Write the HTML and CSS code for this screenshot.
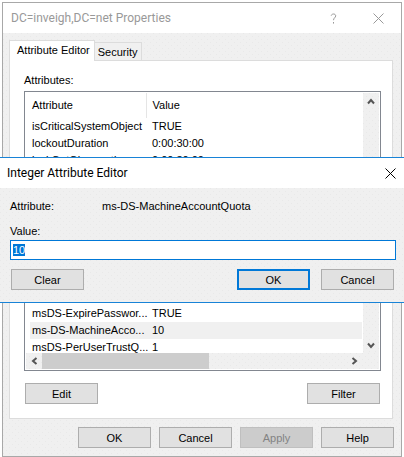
FILE: index.html
```
<!DOCTYPE html>
<html lang="en">
<head>
<meta charset="utf-8">
<title>DC=inveigh,DC=net Properties</title>
<link rel="stylesheet" href="styles.css">
</head>
<body>
<main class="window">
  <header class="titlebar inactive">
    <h1 class="title">DC=inveigh,DC=net Properties</h1>
    <button class="caption" aria-label="Help"><svg width="11" height="11" viewBox="0 0 11 11"><path d="M3.2 2.6C3.5.6 7.6.3 7.7 2.8C7.7 4.8 5.5 4.8 5.5 7.2M5.5 9V10.6"/></svg></button>
    <button class="caption" aria-label="Close"><svg width="11" height="11" viewBox="0 0 11 11"><path d="M.5.5l10 10M10.5.5l-10 10"/></svg></button>
  </header>
  <div class="body">
    <div class="tabs" role="tablist">
      <button class="tab active" role="tab" aria-selected="true">Attribute Editor</button>
      <button class="tab" role="tab" aria-selected="false">Security</button>
    </div>
    <section class="panel">
      <h2 class="label">Attributes:</h2>
      <div class="list">
        <div class="view">
          <table class="attributes">
            <thead><tr><th>Attribute</th><th>Value</th></tr></thead>
            <tbody>
              <tr><td>isCriticalSystemObject</td><td>TRUE</td></tr>
              <tr><td>lockoutDuration</td><td>0:00:30:00</td></tr>
              <tr><td>lockOutObservation...</td><td>0:00:30:00</td></tr>
              <tr class="gap"><td colspan="2"></td></tr>
              <tr><td>msDS-ExpirePasswor...</td><td>TRUE</td></tr>
              <tr class="selected"><td>ms-DS-MachineAcco...</td><td>10</td></tr>
              <tr><td>msDS-PerUserTrustQ...</td><td>1</td></tr>
            </tbody>
          </table>
        </div>
        <div class="vbar">
          <button class="arrow" aria-label="Scroll up"><svg width="8" height="7" viewBox="0 0 8 7"><path d="M1 5.5l3-3.5l3 3.5"/></svg></button>
          <button class="arrow" aria-label="Scroll down"><svg width="8" height="7" viewBox="0 0 8 7"><path d="M1 1.5l3 3.5l3-3.5"/></svg></button>
        </div>
        <div class="hbar">
          <button class="arrow" aria-label="Scroll left"><svg width="7" height="8" viewBox="0 0 7 8"><path d="M5.5 1l-3.5 3l3.5 3"/></svg></button>
          <div class="track"><div class="thumb"></div></div>
          <button class="arrow" aria-label="Scroll right"><svg width="7" height="8" viewBox="0 0 7 8"><path d="M1.5 1l3.5 3l-3.5 3"/></svg></button>
        </div>
      </div>
      <div class="actions">
        <button class="button">Edit</button>
        <button class="button">Filter</button>
      </div>
    </section>
    <footer class="footer">
      <button class="button">OK</button>
      <button class="button">Cancel</button>
      <button class="button" disabled>Apply</button>
      <button class="button">Help</button>
    </footer>
  </div>
</main>
<div class="dialog" role="dialog" aria-labelledby="dialog-title">
  <header class="titlebar">
    <h2 class="title" id="dialog-title">Integer Attribute Editor</h2>
    <button class="caption" aria-label="Close"><svg width="11" height="11" viewBox="0 0 11 11"><path d="M.5.5l10 10M10.5.5l-10 10"/></svg></button>
  </header>
  <form class="form">
    <div class="pair"><span>Attribute:</span><span>ms-DS-MachineAccountQuota</span></div>
    <label for="value">Value:</label>
    <input class="field" id="value" type="text" value="10">
    <div class="choices">
      <button class="button" type="button">Clear</button>
      <button class="button default" type="button">OK</button>
      <button class="button" type="button">Cancel</button>
    </div>
  </form>
</div>
<script>
  const field = document.getElementById("value");
  field.focus();
  field.select();
</script>
</body>
</html>
```
FILE: styles.css
```
* { box-sizing: border-box; }

:root {
  --face: #f0f0f0;
  --dots: conic-gradient(from 270deg at 1px 1px, #e9e9e9 90deg, transparent 0) 0 0 / 6px 6px,
    conic-gradient(from 270deg at 1px 1px, #e9e9e9 90deg, transparent 0) 3px 3px / 6px 6px;
  --edge: #dcdcdc;
  --accent: #0078d7;
}

body {
  margin: 0;
  padding: 2px 2px 0;
  background: #fff;
  color: #000;
  font: 11px/16px "Liberation Sans", Arial, sans-serif;
}

button, input {
  font: inherit;
  color: inherit;
}

h1, h2 {
  margin: 0;
  font-weight: 400;
}

svg {
  display: block;
  fill: none;
  stroke: currentColor;
}

.window {
  border: 1px solid #a8a8a8;
  background: var(--dots), var(--face);
}

.titlebar {
  display: flex;
  align-items: center;
  height: 30px;
  padding-left: 8px;
  background: #fff;
}

.titlebar.inactive { color: #999; }

.title {
  flex: 1;
  font: 12px/16px Roboto, "Noto Sans", sans-serif;
}

.caption {
  display: grid;
  place-items: center;
  width: 45px;
  height: 30px;
  padding: 0;
  border: 0;
  background: none;
}

.body { padding: 7px 7px 8px 6px; }

.tabs {
  display: flex;
  align-items: flex-end;
}

.tab {
  height: 18px;
  padding: 0 3px;
  border: 1px solid var(--edge);
  border-bottom: 0;
  border-left: 0;
  background: var(--face);
}

.tab.active {
  position: relative;
  height: 21px;
  margin-bottom: -1px;
  padding: 0 4px 3px 7px;
  border-left: 1px solid var(--edge);
  background: #fff;
}

.panel {
  margin-right: 1px;
  padding: 11px 11px 14px 14px;
  border: 1px solid var(--edge);
  background: #fff;
}

.label {
  font-size: 11px;
  line-height: 16px;
  margin-bottom: 3px;
}

.list {
  display: grid;
  grid-template: 260px 16px / 1fr 16px;
  padding: 1px;
  border: 1px solid #828790;
}

.view {
  overflow: hidden;
  padding: 0 1px 0 4px;
}

.attributes {
  width: 100%;
  table-layout: fixed;
  border-collapse: collapse;
}

.attributes th, .attributes td {
  height: 17px;
  padding: 0 0 0 2px;
  font-weight: 400;
  line-height: 17px;
  text-align: left;
  white-space: nowrap;
}

.attributes th {
  height: 25px;
  border-right: 1px solid #e5e5e5;
}

.attributes th:first-child { width: 116px; }
.attributes th:last-child { border-right: 0; }
.attributes td + td, .attributes th + th { padding-left: 6px; }
.attributes .gap td { height: 136px; }
.selected { background: var(--face); }

.vbar, .hbar {
  display: flex;
  justify-content: space-between;
  background: var(--dots), var(--face);
  color: #555;
}

.vbar { flex-direction: column; }

.hbar {
  grid-column: 1 / -1;
  padding-right: 17px;
}

.arrow {
  display: grid;
  place-items: center;
  width: 16px;
  height: 16px;
  padding: 0;
  border: 0;
  background: none;
}

.arrow svg { stroke-width: 2; }
.track { flex: 1; }

.thumb {
  width: 55%;
  height: 16px;
  background: #cdcdcd;
}

.actions {
  display: flex;
  justify-content: space-between;
  margin-top: 12px;
  padding: 0 1px;
}

.button {
  width: 73px;
  height: 21px;
  padding: 0;
  border: 1px solid #adadad;
  background: #e1e1e1;
}

.button:disabled {
  border-color: #bfbfbf;
  background: #ccc;
  color: #838383;
}

.button.default { border: 2px solid var(--accent); }

.footer {
  display: flex;
  justify-content: flex-end;
  gap: 8px;
  margin-top: 8px;
}

.dialog {
  position: absolute;
  top: 157px;
  left: 0;
  right: 0;
  border: solid #1883d7;
  border-width: 1px 0;
  background: var(--dots), var(--face);
}

.dialog .titlebar { padding-left: 7px; }
.dialog .caption { width: 28px; }

.form {
  display: flex;
  flex-direction: column;
  padding: 10px 8px 12px 10px;
}

.pair {
  display: grid;
  grid-template-columns: 92px 1fr;
  margin-bottom: 9px;
}

.field {
  width: 100%;
  height: 20px;
  margin-top: 1px;
  padding: 0 2px;
  border: 1px solid var(--accent);
  outline: 0;
  background: #fff;
}

.field::selection {
  background: var(--accent);
  color: #fff;
}

.choices {
  display: flex;
  gap: 11px;
  margin-top: 9px;
  padding: 0 2px 0 1px;
}

.choices .button:first-child { margin-right: auto; }
```
